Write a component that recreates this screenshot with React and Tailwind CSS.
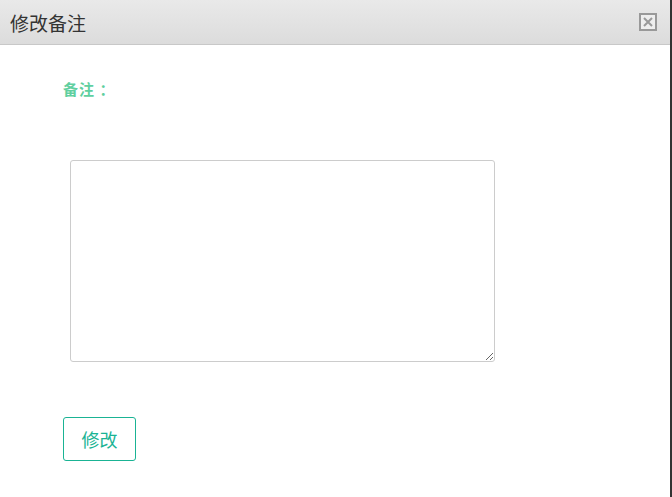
export default function App() {
  return (
    <div
      className="w-[672px] h-[497px] bg-white flex flex-col border-r-2 border-[#333] overflow-hidden"
      style={{ fontFamily: '"Noto Sans CJK SC", "Liberation Sans", sans-serif' }}
    >
      {/* Header */}
      <div className="h-[45px] shrink-0 flex items-center justify-between pl-[10px] pr-[13px] bg-gradient-to-b from-[#e9e9e9] to-[#dcdcdc] border-b border-[#c8c8c8]">
        <span className="text-[19px] text-[#333] leading-none">修改备注</span>
        <button className="w-[18px] h-[18px] border-2 border-[#999] bg-[#eee] flex items-center justify-center">
          <svg width="10" height="10" viewBox="0 0 10 10">
            <path d="M1 1L9 9M9 1L1 9" stroke="#999" strokeWidth="2" />
          </svg>
        </button>
      </div>

      {/* Body */}
      <div className="flex flex-col pl-[63px] pt-[34px]">
        <label className="text-[15px] font-bold text-[#5fcf9f] leading-[20px] tracking-[1px]">备注 ：</label>
        <textarea className="mt-[61px] ml-[7px] w-[425px] h-[202px] border border-[#ccc] rounded-[3px] outline-none resize" />
        <div className="mt-[55px]">
          <button className="w-[73px] h-[44px] border border-[#1ab394] rounded-[3px] text-[18px] text-[#1ab394] bg-white">
            修改
          </button>
        </div>
      </div>
    </div>
  );
}
